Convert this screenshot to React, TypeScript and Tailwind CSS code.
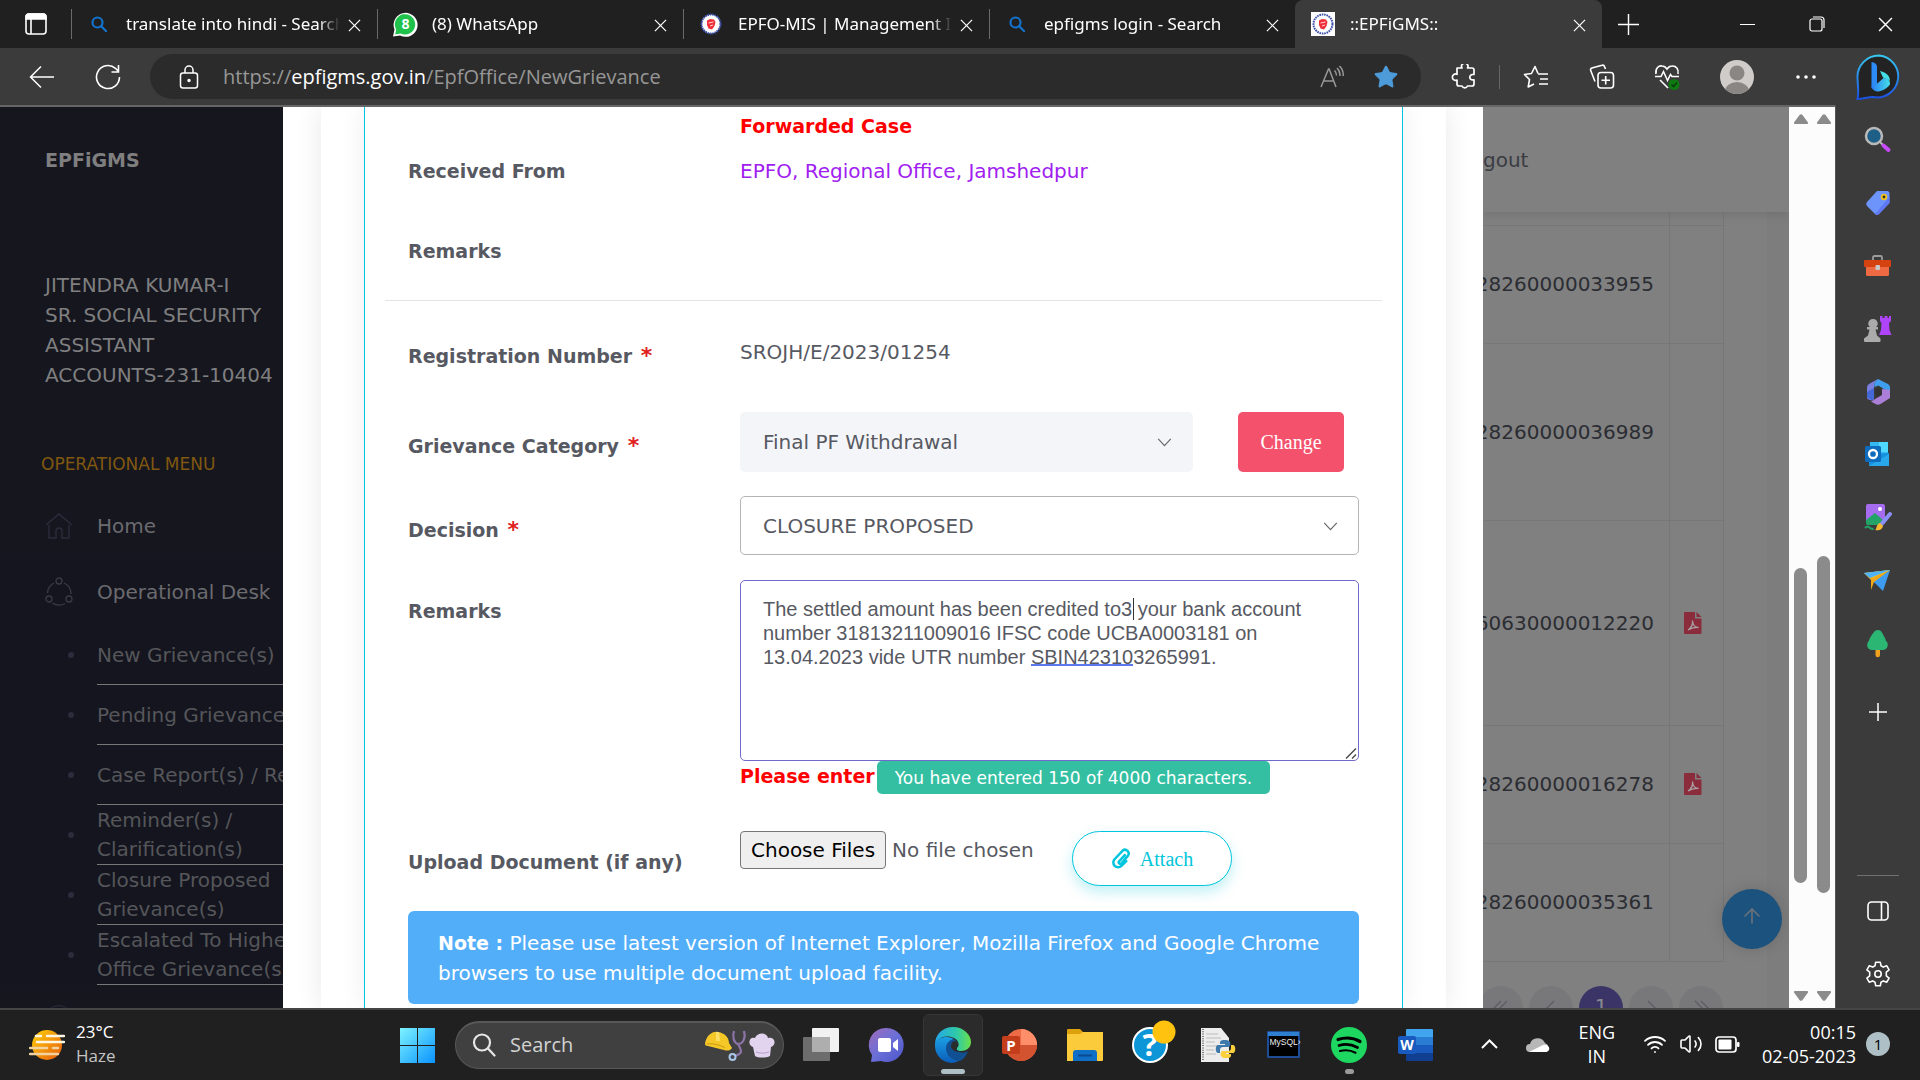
import React from "react";
import { ArrowUp, Star, Volume2, Wifi } from "lucide-react";

type Props = { className?: string };

/* ---------- shared glyphs ---------- */

const Cross = ({ className = "size-3" }: Props) => (
  <svg viewBox="0 0 14 14" className={className} fill="none" stroke="currentColor" strokeWidth="1.3">
    <path d="M1 1l12 12M13 1L1 13" />
  </svg>
);

const BlueSearch = () => (
  <svg viewBox="0 0 16 16" className="size-4" fill="none" stroke="#1372cc" strokeWidth="2.2">
    <circle cx="6.5" cy="6.5" r="5" />
    <path d="M10 10l5.2 5.2" strokeLinecap="round" />
  </svg>
);

const WhatsApp = () => (
  <svg viewBox="0 0 26 26" className="size-[26px]">
    <path d="M1 25.500l1.500-7A12 12 0 1 1 8 24.500z" fill="#fff" />
    <path d="M3.200 23.500l1-5A10.200 10.200 0 1 1 8.500 22.500z" fill="#1fc24a" />
    <text x="13.500" y="18" fontSize="14" fontWeight="700" fill="#fff" textAnchor="middle" fontFamily="Open Sans">8</text>
  </svg>
);

const Emblem = ({ square = false }: { square?: boolean }) => (
  <svg viewBox="0 0 24 24" className="size-6">
    {square && <rect width="24" height="24" fill="#fff" />}
    <circle cx="12" cy="12" r="9.500" fill="#fff" stroke="#3c4fa8" strokeWidth="2" strokeDasharray="1.600 0.800" />
    <path d="M8 8.500l3-1.500 4 .5 1.500 2.500-1 4-2.500 3.500-3.500-1L8 13z" fill="#f03038" />
    <path d="M9.500 11l5-1M11 14l3-1" stroke="#fff" strokeWidth=".8" />
  </svg>
);

/* ---------- browser chrome ---------- */

type TabInfo = { title: string; icon: React.ReactNode; active?: boolean };

const tabs: TabInfo[] = [
  { title: "translate into hindi - Search", icon: <BlueSearch /> },
  { title: "(8) WhatsApp", icon: <WhatsApp /> },
  { title: "EPFO-MIS | Management Information", icon: <Emblem /> },
  { title: "epfigms login - Search", icon: <BlueSearch /> },
  { title: "::EPFiGMS::", icon: <Emblem square />, active: true },
];

const TabStrip = () => (
  <div className="flex h-12 items-stretch bg-[#202020] text-white">
    <button aria-label="Tab actions" className="flex w-[71px] shrink-0 items-center pl-6">
      <svg viewBox="0 0 24 24" className="size-6" fill="none" stroke="#fff" strokeWidth="1.6">
        <rect x="2" y="2" width="20" height="20" rx="3" />
        <path d="M2 5a3 3 0 0 1 3-3h14a3 3 0 0 1 3 3v2H2z" fill="#fff" />
        <path d="M7 7v15" />
      </svg>
    </button>
    {tabs.map((t) => (
      <div
        key={t.title}
        className={
          t.active
            ? "flex w-[307px] items-center rounded-t-lg bg-[#3b3b3b]"
            : "flex w-[306px] items-center bg-[linear-gradient(#6a6a6a,#6a6a6a)] bg-[length:1px_30px] bg-[position:left_center] bg-no-repeat"
        }
      >
        <span className="flex w-[55px] shrink-0 justify-center">{t.icon}</span>
        <span className="flex-1 overflow-hidden font-['Noto_Sans',sans-serif] text-[17px] leading-6 whitespace-nowrap [mask-image:linear-gradient(to_right,#000_90%,transparent)]">
          {t.title}
        </span>
        <button aria-label={`Close ${t.title}`} className="mr-4 ml-2 pt-0.5">
          <Cross className="size-[13px]" />
        </button>
      </div>
    ))}
    <button aria-label="New tab" className="flex w-[52px] items-center justify-center">
      <svg viewBox="0 0 22 22" className="size-[21px]" stroke="#fff" strokeWidth="1.5"><path d="M11 0v22M0 11h22" /></svg>
    </button>
    <div className="ml-auto flex">
      <button aria-label="Minimize" className="flex w-[69px] items-center justify-center">
        <span className="h-px w-[15px] bg-white" />
      </button>
      <button aria-label="Restore" className="flex w-[69px] items-center justify-center">
        <svg viewBox="0 0 16 16" className="size-4" fill="none" stroke="#fff" strokeWidth="1.2">
          <rect x="1" y="3" width="12" height="12" rx="2" />
          <path d="M4 1h8a3 3 0 0 1 3 3v8" />
        </svg>
      </button>
      <button aria-label="Close window" className="flex w-[69px] items-center justify-center">
        <Cross className="size-[15px]" />
      </button>
    </div>
  </div>
);

const ToolButton = ({ label, className, children }: { label: string; className: string; children: React.ReactNode }) => (
  <button aria-label={label} className={`flex shrink-0 items-center justify-center text-white ${className}`}>
    {children}
  </button>
);

const Toolbar = () => (
  <div className="flex h-[57px] items-center bg-[#3b3b3b]">
    <ToolButton label="Back" className="ml-[9px] w-[66px]">
      <svg viewBox="0 0 26 24" className="h-6 w-[26px]" fill="none" stroke="currentColor" strokeWidth="1.5">
        <path d="M25 12H2M12 1.500L1.500 12 12 22.500" />
      </svg>
    </ToolButton>
    <ToolButton label="Refresh" className="w-[66px]">
      <svg viewBox="0 0 26 26" className="size-[26px]" fill="none" stroke="currentColor" strokeWidth="1.600">
        <path d="M24.500 13A11.500 11.500 0 1 1 20.500 4.300L23 7M23.500 1v7h-7" />
      </svg>
    </ToolButton>
    <div className="ml-[9px] flex h-[45px] flex-1 items-center rounded-full bg-[#2b2b2b] pr-2 pl-[29px]">
      <svg viewBox="0 0 20 24" className="h-6 w-5 shrink-0" fill="none" stroke="#fff" strokeWidth="1.500">
        <rect x="1.500" y="8" width="17" height="15" rx="2.500" />
        <path d="M6 8V5a4 4 0 0 1 8 0v3" />
        <circle cx="10" cy="15.500" r="1" fill="#fff" />
      </svg>
      <div className="ml-6 flex-1 text-[20px] leading-7 whitespace-nowrap text-[#979797]">
        https://<span className="text-white">epfigms.gov.in</span>/EpfOffice/NewGrievance
      </div>
      <ToolButton label="Read aloud" className="w-[54px]">
        <svg viewBox="0 0 24 24" className="size-6" fill="none" stroke="#989898" strokeWidth="1.500">
          <path d="M1 22L8.500 4h.6L16 22M3.500 16h10M14.500 5.500c1.500 1.500 2 3 2 5M17 3c2.300 2.200 3.200 5 3 8M19.500 1c2.800 2.800 4 6 3.700 10" />
        </svg>
      </ToolButton>
      <ToolButton label="Favorite" className="w-[54px]">
        <Star className="size-[26px] fill-[#4d9bd9] text-[#4d9bd9]" strokeWidth={1} />
      </ToolButton>
    </div>
    <ToolButton label="Extensions" className="ml-2 w-[70px]">
      <svg viewBox="0 0 26 26" className="size-[26px]" fill="none" stroke="currentColor" strokeWidth="1.700" strokeLinejoin="round">
        <path d="M6 4h5a3.200 3.200 0 1 1 5.500 0H21a2 2 0 0 1 2 2v4.500h-1.500a2.700 2.700 0 1 0 0 5.400H23V20a2 2 0 0 1-2 2h-4.500a3 3 0 0 1-5.500 0H8a2 2 0 0 1-2-2v-4a3.200 3.200 0 1 1 0-5.700z" />
      </svg>
    </ToolButton>
    <span className="h-6 w-px shrink-0 bg-[#666]" />
    <ToolButton label="Favorites" className="w-[71px]">
      <svg viewBox="0 0 26 24" className="h-6 w-[26px]" fill="none" stroke="currentColor" strokeWidth="1.600" strokeLinejoin="round">
        <path d="M15 8.500L12 1.500 8.500 8.500 1.500 9.500l5 5L5.200 22 11 19" />
        <path d="M15 9h10M17 14h8M16 19h9" />
      </svg>
    </ToolButton>
    <ToolButton label="Collections" className="w-[62px]">
      <svg viewBox="0 0 26 26" className="size-[26px]" fill="none" stroke="currentColor" strokeWidth="1.600">
        <path d="M6 17.500L1.700 6.500a2 2 0 0 1 1.200-2.600L13 1.300a2 2 0 0 1 2.500 1.300L16.500 5" />
        <rect x="9" y="8.500" width="15.500" height="15.500" rx="3" />
        <path d="M16.700 12v8.600M12.500 16.300H21" />
      </svg>
    </ToolButton>
    <ToolButton label="Browser essentials" className="w-[68px]">
      <svg viewBox="0 0 26 26" className="size-[26px]" fill="none" stroke="currentColor" strokeWidth="1.600">
        <path d="M2 10C1 4 5 1.500 8 2c2.500 0 4 1.500 5 3 1-1.500 3-3 5-3 4-.3 7 3 6 8" />
        <path d="M1 12.500h6l2.500-5 4 9 3-6 1.500 2H25M6 16l8 8" />
        <circle cx="20" cy="20.500" r="5.500" fill="#0f7a12" stroke="none" />
        <path d="M17.500 20.500l2 2 3.500-4" stroke="#0a3a0c" />
      </svg>
    </ToolButton>
    <ToolButton label="Profile" className="w-[72px]">
      <svg viewBox="0 0 34 34" className="size-[34px]">
        <defs><clipPath id="av"><circle cx="17" cy="17" r="17" /></clipPath></defs>
        <g clipPath="url(#av)">
          <rect width="34" height="34" fill="#cfccc9" />
          <circle cx="17" cy="13" r="7.500" fill="#8a8684" />
          <ellipse cx="17" cy="31" rx="12" ry="9" fill="#8a8684" />
        </g>
      </svg>
    </ToolButton>
    <ToolButton label="Settings and more" className="w-[65px]">
      <svg viewBox="0 0 20 4" className="h-1 w-5" fill="currentColor"><circle cx="2" cy="2" r="1.800" /><circle cx="10" cy="2" r="1.800" /><circle cx="18" cy="2" r="1.800" /></svg>
    </ToolButton>
    <ToolButton label="Bing" className="w-[82px]">
      <svg viewBox="0 0 46 46" className="size-[46px]">
        <defs>
          <linearGradient id="bg1" x1="0" y1="0" x2="0" y2="1"><stop offset="0" stopColor="#37c6f0" /><stop offset="1" stopColor="#1b50e0" /></linearGradient>
          <linearGradient id="bg2" x1="0" y1="0" x2="1" y2="0"><stop offset="0" stopColor="#2a7df5" /><stop offset="1" stopColor="#44e0e8" /></linearGradient>
        </defs>
        <path d="M23 1.500a21 21 0 1 1-6 41.500C12 43 8 44.500 1.500 45 3 40 2 35 1.500 24A21.500 21.500 0 0 1 23 1.500z" fill="#232323" stroke="url(#bg1)" strokeWidth="2" />
        <path d="M15.500 8c3 .5 5.500 2 5.500 5v17l-5.500 4z" fill="#2d8bf7" />
        <path d="M24 17c5 1 10 4 10 10-2-2-5-2.500-7-3.500z" fill="#44dfe6" />
        <path d="M15.500 32c4-1 8-4 12-8 4 0 7 3 6.500 6-1 3-8 7.500-12 7.500-3.500 0-6.500-2.500-6.500-5.500z" fill="url(#bg2)" />
      </svg>
    </ToolButton>
  </div>
);

/* ---------- application side menu ---------- */

const subMenu = [
  "New Grievance(s)",
  "Pending Grievance(s)",
  "Case Report(s) / Reply",
  "Reminder(s) /\nClarification(s)",
  "Closure Proposed\nGrievance(s)",
  "Escalated To Higher\nOffice Grievance(s)",
];

const SideMenu = () => (
  <aside className="flex w-[283px] shrink-0 flex-col overflow-hidden bg-[#16161f] text-[20px] text-[#7f7f7f]">
    <div className="flex h-[105px] shrink-0 items-center pt-0.5 pl-[45px] text-[19px] font-bold">EPFiGMS</div>
    <div className="mt-[58px] shrink-0 pl-[45px] leading-[30px] whitespace-nowrap">
      JITENDRA KUMAR-I
      <br />
      SR. SOCIAL SECURITY
      <br />
      ASSISTANT
      <br />
      ACCOUNTS-231-10404
    </div>
    <div className="mt-[62px] shrink-0 pl-[41px] text-[17px] leading-6 text-[#80580f]">OPERATIONAL MENU</div>
    <nav className="mt-[17px] flex shrink-0 flex-col text-[#6b6b6f]">
      <a href="#home" className="flex h-[66px] items-center pl-[45px]">
        <svg viewBox="0 0 28 26" className="h-[26px] w-7" fill="none" stroke="#2b2c3c" strokeWidth="1.400">
          <path d="M1 12L14 1l13 11M4 12v13h7v-7a3 3 0 0 1 6 0v7h7V12" />
        </svg>
        <span className="ml-6">Home</span>
      </a>
      <a href="#desk" className="flex h-[66px] items-center bg-[#14151e] pl-[45px] whitespace-nowrap">
        <svg viewBox="0 0 28 30" className="h-[30px] w-7" fill="none" stroke="#3a3b48" strokeWidth="1.300">
          <circle cx="14" cy="4" r="3" /><circle cx="4" cy="22" r="3" /><circle cx="24" cy="22" r="3" />
          <path d="M9 6a12 12 0 0 0-6.500 10M19 6a12 12 0 0 1 7 11M7.500 26a12 12 0 0 0 12.500.5" />
        </svg>
        <span className="ml-6">Operational Desk</span>
      </a>
      <ul className="bg-[#14151e] text-[#55565a]">
        {subMenu.map((s) => (
          <li key={s}>
            <a href="#item" className="flex h-[60px] items-center leading-[29px] whitespace-pre">
              <span className="ml-[68px] size-1.5 shrink-0 rounded-full bg-[#2b2c3c]" />
              <span className="ml-[23px] flex h-[60px] flex-1 items-center border-b border-[#77777a] pt-px">{s}</span>
            </a>
          </li>
        ))}
      </ul>
      <span className="mt-5 ml-[45px] size-7 rounded-full border border-[#2b2c3c]" />
    </nav>
  </aside>
);

/* ---------- grievance form ---------- */

const Row = ({ className, children }: { className: string; children: React.ReactNode }) => (
  <div className={`grid grid-cols-[332px_1fr] px-[23px] ${className}`}>{children}</div>
);

const Label = ({ htmlFor, className, children }: { htmlFor?: string; className: string; children: React.ReactNode }) =>
  htmlFor ? (
    <label htmlFor={htmlFor} className={`text-[19px] font-bold ${className}`}>{children}</label>
  ) : (
    <span className={`text-[19px] font-bold ${className}`}>{children}</span>
  );

const Required = () => <span className="ml-0.5 text-[22px] leading-5 font-bold text-[#e02020]">*</span>;

const Chevron = ({ className = "" }: Props) => (
  <svg viewBox="0 0 16 10" className={`pointer-events-none absolute h-[9px] w-[15px] ${className}`} fill="none" stroke="#666" strokeWidth="1.300">
    <path d="M1 1l7 7.500L15 1" />
  </svg>
);

const GrievanceForm = () => (
  <main className="min-w-0 flex-1 overflow-hidden bg-white pr-[37px] pl-[38px] text-[20px] leading-[30px] text-[#575962]">
    <div className="h-full bg-white px-[43px] shadow-[0_0_26px_rgba(0,0,0,0.09)]">
      <form className="h-full border-x border-[#00c5dc] bg-white px-5 pt-1 shadow-[0_0_26px_rgba(0,0,0,0.07)]">
        <Row className="">
          <span />
          <span className="text-[19px] font-bold text-[#ff0000]">Forwarded Case</span>
        </Row>
        <Row className="mt-[15px]">
          <Label className="">Received From</Label>
          <span className="text-[#a020f0]">EPFO, Regional Office, Jamshedpur</span>
        </Row>
        <Row className="mt-[50px]">
          <Label className="">Remarks</Label>
        </Row>
        <hr className="mt-[34px] border-[#e4e4e6]" />
        <Row className="mt-9">
          <Label className="pt-1">Registration Number <Required /></Label>
          <span>SROJH/E/2023/01254</span>
        </Row>
        <Row className="mt-[41px]">
          <Label htmlFor="category" className="pt-[19px]">Grievance Category <Required /></Label>
          <div className="flex">
            <div className="relative h-[60px] w-[453px]">
              <select id="category" className="size-full appearance-none rounded-[5px] bg-[#f4f5f8] px-[23px]">
                <option>Final PF Withdrawal</option>
              </select>
              <Chevron className="top-[26px] right-[21px]" />
            </div>
            <button type="button" className="ml-[45px] h-[60px] w-[106px] rounded-[5px] bg-[#f4516c] font-['Liberation_Serif',serif] text-[20px] text-white">
              Change
            </button>
          </div>
        </Row>
        <Row className="mt-6">
          <Label htmlFor="decision" className="pt-[19px]">Decision <Required /></Label>
          <div className="relative h-[59px]">
            <select id="decision" className="size-full appearance-none rounded-[5px] border border-[#b4b4b4] bg-white px-[22px]">
              <option>CLOSURE PROPOSED</option>
            </select>
            <Chevron className="top-[26px] right-[21px]" />
          </div>
        </Row>
        <Row className="mt-[25px]">
          <Label htmlFor="remarks" className="pt-4">Remarks</Label>
          <div>
            <div className="relative flex">
              <textarea
                id="remarks"
                spellCheck={false}
                className="h-[181px] w-full resize-none rounded-[5px] border border-[#716aca] px-[22px] py-4 font-['Liberation_Sans',sans-serif] text-[20px] leading-6 outline-none"
                defaultValue={
                  "The settled amount has been credited to3 your bank account\nnumber 31813211009016 IFSC code UCBA0003181 on\n13.04.2023 vide UTR number SBIN423103265991."
                }
              />
              <span className="absolute top-[18px] left-[393px] h-[22px] w-px bg-[#333]" />
              <span className="absolute top-[84px] left-[291px] h-[2px] w-[102px] bg-[#5b78f0]" />
              <svg viewBox="0 0 12 12" className="pointer-events-none absolute right-[2px] bottom-[2px] size-3" stroke="#444" strokeWidth="1.300">
                <path d="M1 11.500L11 1.500M7 11.500l4-4" />
              </svg>
            </div>
            <div className="flex h-[33px] whitespace-nowrap">
              <span className="text-[19px] font-bold text-[#ff0000]">Please enter</span>
              <span className="ml-0.5 flex items-center rounded-[5px] bg-[#34bfa3] px-[18px] text-[17px] text-white">
                You have entered 150 of 4000 characters.
              </span>
            </div>
          </div>
        </Row>
        <Row className="mt-[37px]">
          <Label htmlFor="files" className="pt-4">Upload Document (if any)</Label>
          <div className="flex items-start">
            <input
              id="files"
              type="file"
              multiple
              className="w-[332px] leading-7 file:mr-1.5 file:h-[38px] file:rounded-[4px] file:border file:border-solid file:border-[#767676] file:bg-[#efefef] file:px-2.5 file:text-black"
            />
            <button
              type="button"
              className="flex h-[55px] w-[160px] items-center justify-center rounded-full border border-[#00c5dc] bg-white font-['Liberation_Serif',serif] text-[20px] text-[#00c5dc] shadow-[0_6px_14px_rgba(0,197,220,0.25)]"
            >
              <svg viewBox="0 0 22 22" className="mr-2 size-[21px]" fill="none" stroke="currentColor" strokeWidth="2.600" strokeLinecap="round">
                <path d="M14.500 7.500L8.500 14a1.600 1.600 0 0 0 2.600 2l6.700-8a3.900 3.900 0 0 0-5.600-5.300L4 11.500a5 5 0 0 0 7 7.300l5-5" />
              </svg>
              Attach
            </button>
          </div>
        </Row>
        <div className="mx-[23px] mt-[25px] rounded-[6px] bg-[#53aefa] pt-[17px] pb-4 pl-[30px] text-white">
          <b className="text-[19px]">Note :</b> Please use latest version of Internet Explorer, Mozilla Firefox and Google Chrome
          <br />
          browsers to use multiple document upload facility.
        </div>
      </form>
    </div>
  </main>
);

/* ---------- dimmed list behind the dialog ---------- */

const PdfIcon = () => (
  <svg viewBox="0 0 18 22" className="ml-[14px] h-[22px] w-[18px]">
    <path d="M1 0h10v6.500h6.500V21a1 1 0 0 1-1 1H1a1 1 0 0 1-1-1V1a1 1 0 0 1 1-1z" fill="#8a2c3c" />
    <path d="M12.500 0l5 5h-5z" fill="#8a2c3c" />
    <path d="M4 18c3-2 5-6 4.500-9.500M8.500 9c.5 4 3 6.500 6 6.500-4-.5-8 .8-10.500 2.500" fill="none" stroke="#a9a0a2" strokeWidth="1.300" />
  </svg>
);

const records = [
  { no: "28260000033955", h: "h-[118px]", pdf: false },
  { no: "28260000036989", h: "h-[177px]", pdf: false },
  { no: "60630000012220", h: "h-[205px]", pdf: true },
  { no: "28260000016278", h: "h-[118px]", pdf: true },
  { no: "28260000035361", h: "h-[118px]", pdf: false },
];

const pages = ["«", "‹", "1", "›", "»"];

const Backdrop = () => (
  <section className="relative w-[306px] shrink-0 overflow-hidden bg-[#7d7d7d] text-[20px] text-[#2b2d33]">
    <div className="mr-[22px] h-full bg-[#808080]">
      <header className="relative -mr-[22px] flex h-[105px] items-center bg-[#808080] shadow-[0_2px_10px_rgba(0,0,0,0.12)]">
        <a href="#logout" className="text-[#3a3c43]">gout</a>
      </header>
      <table className="w-[241px] table-fixed border-collapse border-r border-[#77777a]">
        <colgroup><col /><col className="w-[54px]" /></colgroup>
        <tbody>
          <tr className="h-[13px]"><td /><td className="border-l border-[#77777a]" /></tr>
          {records.map((r) => (
            <tr key={r.no} className={`border-y border-[#77777a] ${r.h}`}>
              <td className="p-0 pr-[15px]"><div className="flex justify-end overflow-hidden">{r.no}</div></td>
              <td className="border-l border-[#77777a] p-0">{r.pdf && <PdfIcon />}</td>
            </tr>
          ))}
        </tbody>
      </table>
      <div className="mt-6 -ml-1 flex gap-1.5 text-[20px]">
        {pages.map((p) => (
          <button
            key={p}
            aria-label={`Page ${p}`}
            className={
              p === "1"
                ? "size-11 shrink-0 rounded-full bg-[#3a3467] pb-1 text-[#8a8a90]"
                : "flex size-11 shrink-0 items-center justify-center rounded-full bg-[#78787b] text-[#5c5c62]"
            }
          >
            {p === "1" ? p : (
              <svg viewBox="0 0 16 16" className="size-4" fill="none" stroke="currentColor" strokeWidth="1.300">
                {p === "«" && <path d="M8 1L1 8l7 7M14 1L7 8l7 7" />}
                {p === "‹" && <path d="M11 1L4 8l7 7" />}
                {p === "›" && <path d="M5 1l7 7-7 7" />}
                {p === "»" && <path d="M2 1l7 7-7 7M8 1l7 7-7 7" />}
              </svg>
            )}
          </button>
        ))}
      </div>
    </div>
    <button aria-label="Scroll to top" className="absolute right-[7px] bottom-[59px] flex size-[60px] items-center justify-center rounded-full bg-[#1c527e] pb-1.5 text-[#6f747c] shadow-[0_0_16px_rgba(0,0,0,0.15)]">
      <ArrowUp className="size-6" strokeWidth={1.5} />
    </button>
  </section>
);

const ScrollTrack = ({ top, thumb, bottom }: { top: string; thumb: string; bottom: string }) => (
  <div className="flex w-[23px] shrink-0 flex-col items-center bg-[#fcfcfc] py-[7px]">
    <svg viewBox="0 0 14 10" className="h-2.5 w-3.5 shrink-0" fill="#8b8b8b"><path d="M5.500 1a2 2 0 0 1 3 0L14 8.500a1 1 0 0 1-1 1.500H1a1 1 0 0 1-1-1.500z" /></svg>
    <span className={top} />
    <span className={`w-[13px] rounded-full bg-[#8b8b8b] ${thumb}`} />
    <span className={bottom} />
    <svg viewBox="0 0 14 10" className="h-2.5 w-3.5 shrink-0 rotate-180" fill="#8b8b8b"><path d="M5.500 1a2 2 0 0 1 3 0L14 8.500a1 1 0 0 1-1 1.500H1a1 1 0 0 1-1-1.500z" /></svg>
  </div>
);

/* ---------- browser side bar ---------- */

const sideIcons: { name: string; art: React.ReactNode }[] = [
  { name: "Search", art: (<><circle cx="10" cy="10" r="8" fill="#1d5f86" stroke="#b9b9b9" strokeWidth="2.500" /><path d="M16 16l3 3" stroke="#b9b9b9" strokeWidth="2" /><path d="M19.500 19.500l5 4.500" stroke="#c74bfb" strokeWidth="4" strokeLinecap="round" /></>) },
  { name: "Shopping", art: (<><path d="M13 2h10a2.500 2.500 0 0 1 2.500 2.500V14L15 25a3 3 0 0 1-4 0l-8-8a3 3 0 0 1 0-4z" fill="#6d94fb" /><path d="M25.500 8V14L15 25a3 3 0 0 1-4 0z" fill="#5f78f5" /><circle cx="20" cy="8" r="2.300" fill="#333" stroke="#f2c318" strokeWidth="1.800" /></>) },
  { name: "Tools", art: (<><path d="M9 8V5.500A1.500 1.500 0 0 1 10.500 4h6A1.500 1.500 0 0 1 18 5.500V8" fill="none" stroke="#9c9c9c" strokeWidth="1.800" /><rect x="2" y="13" width="23" height="11" rx="1.500" fill="#ee6a42" /><rect x="0" y="8" width="27" height="7" rx="1" fill="#d4430f" /><rect x="11.500" y="13" width="4.500" height="5" rx="1" fill="#c9c9c9" /></>) },
  { name: "Games", art: (<><path d="M16 1h2.500v2h2V1h3v2h1.500V1H27v5l-2 2 .5 7 2 5H15l2-5 .5-7-1.500-2z" fill="#b044fa" /><path d="M9 4a4.500 4.500 0 0 1 3 8h2v2.500h-2.500l1.500 6 3.500 3V26a1 1 0 0 1-1 1H1a1 1 0 0 1-1-1v-2.500l4-3 1.500-6H3V12h3a4.500 4.500 0 0 1 3-8z" fill="#ababab" /></>) },
  { name: "Microsoft 365", art: (<><path d="M14 1L5 6a4 4 0 0 0-2 3.500V20c1 2 4 3 7 1.500V10c0-4 1-7 4-9z" fill="#7a7fe0" /><path d="M3 14v5.500l5 3 2-1.500V10z" fill="#4468d8" /><path d="M14 1a8 8 0 0 0-3.500 8l4-1.500L26 15V9.500A4 4 0 0 0 24 6z" fill="#3f9fee" /><path d="M26 12v8l-9.500 6a5 5 0 0 1-5 0L7 23.500l11-6.500V11z" fill="#ab7fd8" /><path d="M11 11.500L14.500 9l3.500 2.500V16l-3.500 2.500L11 16.500z" fill="#333" /></>) },
  { name: "Outlook", art: (<><rect x="6" y="1" width="18" height="13" fill="#35b8f1" /><rect x="15" y="1" width="9" height="10" fill="#50d9ff" /><path d="M5 13l20-1v13H5z" fill="#1490df" /><path d="M5 25L25 13v12z" fill="#28a8ea" /><rect x="1" y="5" width="16" height="16" rx="1.500" fill="#0f6cbd" /><circle cx="9" cy="13" r="4" fill="none" stroke="#fff" strokeWidth="2.300" /></>) },
  { name: "Image creator", art: (<><rect x="2" y="0" width="19" height="20" rx="2" fill="#a66cf0" /><path d="M2 16l9-7 9 8-4 4H4a2 2 0 0 1-2-2z" fill="#23a366" /><circle cx="16" cy="5" r="2" fill="#fff" /><path d="M26 10L16 22" stroke="#8a90f8" strokeWidth="4" strokeLinecap="round" /><path d="M16 19l3 3c-1 4-4 5-8 4 2-1 1-6 5-7z" fill="#f5b82e" /><path d="M1 24c3-3 4-1 5 0s3 0 3 2" fill="none" stroke="#23a366" strokeWidth="2" /></>) },
  { name: "Drop", art: (<><path d="M0 6l26-3-7 21-6-6z" fill="#3d9cf0" /><path d="M0 6l26-3L10 13z" fill="#f7c325" /><path d="M0 6l7 7 0 10 3-8L26 3 8 11z" fill="#f0a818" /><path d="M0 6l26-3L6 11z" fill="#4fb4f7" /></>) },
  { name: "Games for good", art: (<><path d="M11.500 19h4.500v6a2 2 0 0 1-4.500 0z" fill="#f2a31b" /><path d="M14 0c4 0 5 5 7 8 1 2 0 2 2 4 2 3 0 8-4 8H8c-4 0-6-4-4-8 2-2 1-3 2-4 2-3 4-8 8-8z" fill="#2cb673" /></>) },
];

const SideBar = () => (
  <aside className="flex w-[85px] shrink-0 flex-col items-center border-l border-[#555] bg-[#3b3b3b] pt-[3px] text-white">
    {sideIcons.map((s) => (
      <button key={s.name} aria-label={s.name} className="flex h-[63px] w-full items-center justify-center">
        <svg viewBox="0 0 28 28" className="size-7">{s.art}</svg>
      </button>
    ))}
    <button aria-label="Add" className="flex h-[74px] w-full items-center justify-center">
      <svg viewBox="0 0 18 18" className="size-[18px]" stroke="#fff" strokeWidth="1.500"><path d="M9 0v18M0 9h18" /></svg>
    </button>
    <span className="mt-auto h-px w-[42px] bg-[#707070]" />
    <button aria-label="Toggle side bar" className="mt-[3px] flex h-[63px] w-full items-center justify-center">
      <svg viewBox="0 0 22 20" className="h-5 w-[22px]" fill="none" stroke="#fff" strokeWidth="1.600"><rect x="1" y="1" width="20" height="18" rx="3.500" /><path d="M14.500 1v18" /></svg>
    </button>
    <button aria-label="Settings" className="mb-[3px] flex h-[63px] w-full items-center justify-center">
      <svg viewBox="0 0 26 26" className="size-[26px]" fill="none" stroke="#fff" strokeWidth="1.600" strokeLinejoin="round">
        <path d="M10.700 1.200h4.600l.7 3.600 2.300 1.300 3.500-1.300 2.300 4-2.800 2.400v3.600l2.800 2.400-2.300 4-3.500-1.300-2.300 1.300-.7 3.600h-4.600l-.7-3.600-2.300-1.300-3.500 1.300-2.300-4 2.800-2.400v-3.600L1.900 8.800l2.300-4 3.500 1.300L10 4.800z" />
        <circle cx="13" cy="13" r="3.200" />
      </svg>
    </button>
  </aside>
);

/* ---------- task bar ---------- */

const TaskIcon = ({ name, children, active = false }: { name: string; children: React.ReactNode; active?: boolean }) => (
  <button aria-label={name} className="relative flex h-[70px] w-[66px] shrink-0 items-center justify-center">
    {active && <span className="absolute inset-x-[3px] inset-y-1 rounded-md border border-[#363636] bg-[#2b2b2b]" />}
    <svg viewBox="0 0 38 38" className="relative size-[38px] overflow-visible">{children}</svg>
    {active && <span className="absolute bottom-1.5 h-[5px] w-6 rounded-full bg-[#aebfc5]" />}
    {name === "Spotify" && <span className="absolute bottom-1.5 h-[5px] w-[9px] rounded-full bg-[#9a9a9a]" />}
  </button>
);

const TaskBar = () => (
  <footer className="flex h-[72px] shrink-0 items-center border-t-2 border-[#454545] bg-[#202020] text-[17px] leading-6 text-white">
    <div className="flex w-[400px] shrink-0 items-center pl-[29px]">
      <svg viewBox="0 0 36 32" className="h-8 w-9">
        <defs><linearGradient id="sun" x1="0" y1="0" x2="1" y2="1"><stop offset="0" stopColor="#fdd20a" /><stop offset="1" stopColor="#e8590c" /></linearGradient></defs>
        <circle cx="18" cy="16" r="15" fill="url(#sun)" />
        <g strokeWidth="2.500" strokeLinecap="round">
          <path d="M7 7h5M18 7h17M8 13h27" stroke="#fdf6e3" />
          <path d="M1 19h17M24 19h5M1 25h28" stroke="#f2d3a0" />
        </g>
      </svg>
      <div className="ml-[11px] pb-0.5">
        <div>23°C</div>
        <div className="text-[#c4c4c4]">Haze</div>
      </div>
    </div>
    <button aria-label="Start">
      <svg viewBox="0 0 35 35" className="size-[35px]">
        <defs><linearGradient id="win" x1="0" y1="0" x2="1" y2="1"><stop offset="0" stopColor="#7df3ff" /><stop offset="1" stopColor="#0a93ff" /></linearGradient></defs>
        <path d="M0 0h17v17H0zM18 0h17v17H18zM0 18h17v17H0zM18 18h17v17H18z" fill="url(#win)" />
      </svg>
    </button>
    <label className="ml-5 flex h-12 w-[329px] shrink-0 items-center rounded-full border border-t-2 border-[#585858] bg-[#404040] pr-[7px] pb-0.5 pl-4">
      <svg viewBox="0 0 24 24" className="size-6" fill="none" stroke="#e6e6e6" strokeWidth="2.200"><circle cx="10" cy="9.500" r="8" /><path d="M16 15.500l6.500 7" strokeLinecap="round" /></svg>
      <input aria-label="Search" placeholder="Search" className="ml-[14px] w-40 bg-transparent text-[20px] outline-none placeholder:text-[#d2d2d2]" />
      <svg viewBox="0 0 72 32" className="ml-auto h-8 w-[72px]">
        <path d="M1 15C2 7 8 2 14 3c7 1 11 6 11 11l3 5c-2 3-5 3-8 2L4 17c-2 0-3-1-3-2z" fill="#f5c827" />
        <path d="M3 15c5-1 14 1 18 4" stroke="#c99a12" fill="none" /><path d="M12 3l3 0 1 9h-4z" fill="#fbe064" />
        <path d="M30 2c-2 6 0 12 4 13 5 0 8-6 6-13M34 15c3 6 6 9-3 12" fill="none" stroke="#8d74a8" strokeWidth="2.200" />
        <circle cx="28.500" cy="28" r="3" fill="#445" stroke="#a9c8e8" strokeWidth="2" />
        <path d="M49 18c-6-2-4-11 2-9 2-6 12-6 13 0 7-2 9 7 3 9l-1 9c-4 2-12 2-15 0z" fill="#e2d3ee" />
        <path d="M52 23c4 1.500 9 1.500 13 0" stroke="#b79acb" fill="none" />
      </svg>
    </label>
    <div className="ml-1 flex">
      <TaskIcon name="Task view">
        <rect x="1" y="11" width="27" height="24" rx="1" fill="#6d6d6d" /><rect x="10" y="2" width="27" height="24" rx="1" fill="#f2f2f2" /><rect x="10" y="11" width="18" height="15" fill="#aeaeae" />
      </TaskIcon>
      <TaskIcon name="Chat">
        <defs><linearGradient id="chat" x1="0" y1="0" x2="1" y2="1"><stop offset="0" stopColor="#a06bb8" /><stop offset=".5" stopColor="#6b6fd8" /><stop offset="1" stopColor="#4c56c8" /></linearGradient></defs>
        <path d="M19 2a17 17 0 1 1-6 33L3 36l1-7A17 17 0 0 1 19 2z" fill="url(#chat)" />
        <rect x="10" y="12" width="13" height="14" rx="2" fill="#fff" /><path d="M25 17l5-4v12l-5-4z" fill="#fff" />
      </TaskIcon>
      <TaskIcon name="Edge" active>
        <defs>
          <linearGradient id="e1" x1="0" y1="0" x2="1" y2="0"><stop offset="0" stopColor="#23a7e8" /><stop offset=".6" stopColor="#2fc9a8" /><stop offset="1" stopColor="#6be04a" /></linearGradient>
          <linearGradient id="e2" x1="0" y1="0" x2="0" y2="1"><stop offset="0" stopColor="#1ba0e6" /><stop offset="1" stopColor="#0b5cb8" /></linearGradient>
        </defs>
        <path d="M1 17C2 7 10 1 19 1c11 0 18 8 18 15 0 6-5 9-10 9-4 0-5-2-4-3 2-2 2-4 1-6-2-6-16-9-23 1z" fill="url(#e1)" />
        <path d="M1 17c3-6 13-8 19-4-7 2-9 9-6 14 3 6 9 7 13 6-3 3-7 4-10 4C7 36 0 28 1 17z" fill="url(#e2)" />
        <path d="M12 22c0-4 3-8 8-9 3 2 4 5 3 8-3 4 6 8 11 4-2 6-6 10-9 10-8-1-13-6-13-13z" fill="#104f92" />
        <path d="M20 15c3 0 4 4 3 6-2 3 2 5 6 4-5 2-11 0-12-4-.5-2 1-5 3-6z" fill="#2b2b2b" />
      </TaskIcon>
      <TaskIcon name="PowerPoint">
        <circle cx="21" cy="19" r="16" fill="#ed6c47" /><path d="M21 3a16 16 0 0 1 16 16H21z" fill="#ff8f6b" /><path d="M5 19h32a16 16 0 0 1-32 0z" fill="#d35230" />
        <rect x="2" y="10" width="18" height="18" rx="2" fill="#c43e1c" /><text x="11" y="24.500" fontSize="15" fontWeight="700" fill="#fff" textAnchor="middle" fontFamily="Open Sans">P</text>
      </TaskIcon>
      <TaskIcon name="File Explorer">
        <path d="M1 4a1 1 0 0 1 1-1h12l3 3v5H1z" fill="#dda10c" /><path d="M1 8h13l3-2h20v28a1 1 0 0 1-1 1H1z" fill="#fccb3c" /><path d="M7 35V27a3 3 0 0 1 3-3h18a3 3 0 0 1 3 3v8z" fill="#0f6fc6" /><path d="M12 29.500h14" stroke="#0a4a90" strokeWidth="2" />
      </TaskIcon>
      <TaskIcon name="Help">
        <circle cx="18" cy="19" r="17" fill="#0c96d8" stroke="#fff" strokeWidth="2" />
        <text x="18" y="30" fontSize="31" fontWeight="700" fill="#fff" textAnchor="middle" fontFamily="Open Sans">?</text>
        <circle cx="32" cy="6" r="11.500" fill="#ffc20e" />
      </TaskIcon>
      <TaskIcon name="Python script">
        <path d="M3 2h20l8 10v24H3z" fill="#ececec" /><path d="M5 3v32" stroke="#555" strokeWidth="1.500" strokeDasharray="1 1.300" />
        <path d="M8 8h12M8 12h15M8 16h9M8 20h12M8 24h8M8 28h10" stroke="#bbb" />
        <path d="M27 14c-5 0-5 1-5 4h5v1h-7c-3 0-3 8 0 8h2v-3c0-2 1-3 3-3h5c3 0 3-5 1-6-1-1-2-1-4-1z" fill="#3d7aab" />
        <path d="M28 32c5 0 5-1 5-4h-5v-1h7c3 0 3-8 0-8h-2v3c0 2-1 3-3 3h-5c-3 0-3 5-1 6 1 1 2 1 4 1z" fill="#fcd03c" />
      </TaskIcon>
      <TaskIcon name="MySQL">
        <rect x="3" y="5" width="33" height="27" rx="1" fill="#1f4d95" /><rect x="4" y="6" width="31" height="4" fill="#2f7fd0" /><rect x="5" y="10" width="29" height="20" fill="#000" />
        <text x="5.500" y="19" fontSize="8.500" fill="#eee" fontFamily="Liberation Sans">MySQL›</text>
      </TaskIcon>
      <TaskIcon name="Spotify">
        <circle cx="19" cy="19" r="18" fill="#1ed760" />
        <g fill="none" stroke="#000" strokeLinecap="round"><path d="M8 13.500c8-2.500 16-1.500 22 2" strokeWidth="3.200" /><path d="M9 19.500c7-2 13-1 18.500 2" strokeWidth="2.700" /><path d="M10 25c6-1.500 11-.7 15.500 1.700" strokeWidth="2.200" /></g>
      </TaskIcon>
      <TaskIcon name="Word">
        <path d="M11 3h25a1 1 0 0 1 1 1v7H10V4a1 1 0 0 1 1-1z" fill="#41a5ee" /><path d="M10 11h27v8H10z" fill="#2b7cd3" /><path d="M10 19h27v8H10z" fill="#185abd" /><path d="M10 27h27v7a1 1 0 0 1-1 1H11a1 1 0 0 1-1-1z" fill="#103f91" />
        <rect x="2" y="10" width="18" height="18" rx="2" fill="#185abd" /><text x="11" y="24" fontSize="14" fontWeight="700" fill="#fff" textAnchor="middle" fontFamily="Open Sans">W</text>
      </TaskIcon>
    </div>
    <div className="ml-auto flex items-center pr-[30px] pb-0.5">
      <svg viewBox="0 0 17 10" className="h-2.5 w-[17px]" fill="none" stroke="#fff" strokeWidth="2"><path d="M1 9l7.500-7.500L16 9" /></svg>
      <svg viewBox="0 0 24 17" className="ml-7 h-[17px] w-6"><path d="M4 16a4 4 0 0 1 0-8 8 8 0 0 1 15-1 5 5 0 0 1 1 9z" fill="#b7b7b7" /><path d="M3 16L17 9c6-2 9 6 3 7z" fill="#fff" /></svg>
      <div className="ml-7 text-center text-[18px]">ENG<br />IN</div>
      <Wifi className="ml-7 size-6" strokeWidth={1.8} />
      <Volume2 className="ml-3 size-6" strokeWidth={1.6} />
      <svg viewBox="0 0 25 17" className="ml-3 h-[17px] w-[25px]"><rect x="1" y="1" width="20" height="15" rx="3" fill="none" stroke="#fff" strokeWidth="1.700" /><rect x="3.500" y="3.500" width="13" height="10" rx="1" fill="#fff" /><rect x="22" y="6" width="2.500" height="5" rx="1" fill="#fff" /></svg>
      <div className="ml-[22px] text-right text-[18px]">00:15<br />02-05-2023</div>
      <span className="ml-2.5 flex size-6 items-center justify-center rounded-full bg-[#aebfc5] text-[15px] text-black">1</span>
    </div>
  </footer>
);

export default function App() {
  return (
    <div className="flex h-screen flex-col overflow-hidden font-['Open_Sans',sans-serif]">
      <TabStrip />
      <Toolbar />
      <div className="flex min-h-0 flex-1">
        <div className="flex min-w-0 flex-1 border-t-2 border-[#666] font-['DejaVu_Sans',sans-serif]">
          <SideMenu />
          <GrievanceForm />
          <Backdrop />
          <ScrollTrack top="flex-[444]" thumb="flex-[315]" bottom="flex-[108]" />
          <ScrollTrack top="flex-[432]" thumb="flex-[337]" bottom="flex-[98]" />
        </div>
        <SideBar />
      </div>
      <TaskBar />
    </div>
  );
}
